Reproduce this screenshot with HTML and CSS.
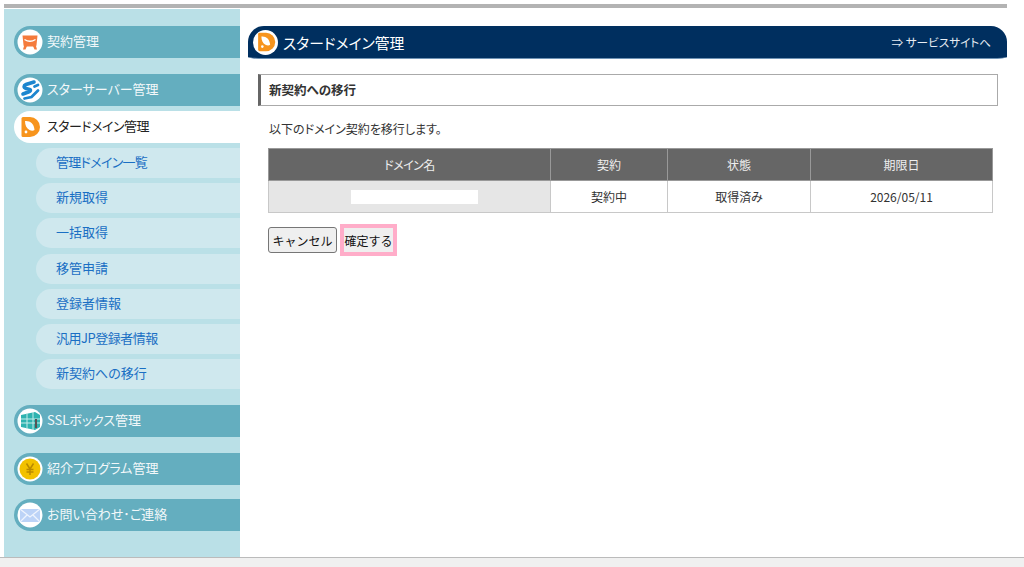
FILE: index.html
```html
<!DOCTYPE html>
<html lang="ja">
<head>
<meta charset="utf-8">
<title>スタードメイン管理</title>
<link rel="stylesheet" href="styles.css">
</head>
<body>
<div class="page">
  <div class="topbar"></div>
  <div class="layout">
    <nav class="side">
      <a class="main m-contract"><span class="ico"><svg viewBox="0 0 26 26" width="26" height="26"><circle cx="13" cy="13" r="12.500" fill="#fff"/><path d="M5.500 6.500h15l-1 9.500c0 1-1 1.500-2 1.500h-9c-1 0-2-.5-2-1.500z" fill="#f47a3c"/><path d="M7 17h3l-1.500 3.500H6zM16 17h3l1 3.500h-2.500z" fill="#f47a3c"/><path d="M7.500 10.500q5.500 3.500 11 0" stroke="#fff" stroke-width="1.300" fill="none"/></svg></span>契約管理</a>
      <a class="main m-server"><span class="ico"><svg viewBox="0 0 26 26" width="26" height="26"><circle cx="13" cy="13" r="12.500" fill="#fff"/><path d="M17 5 9 7.500c-2.500 1-2.500 3.300 0 4l3.500 1c1.500.6 1 1.700-.5 2.200L6 17" stroke="#1c86cf" stroke-width="3.600" fill="none" stroke-linecap="round"/><path d="M21 8l-3.500 1.500M21 13.500 14.500 20l-7 1.500" stroke="#1c86cf" stroke-width="2.800" fill="none" stroke-linecap="round"/></svg></span>スターサーバー管理</a>
      <a class="main active"><span class="ico"><svg viewBox="0 0 26 26" width="26" height="26"><path d="M6 3h7a10 10 0 0 1 0 20H6a1.500 1.500 0 0 1-1.500-1.500v-17A1.500 1.500 0 0 1 6 3z" fill="#f7941d"/><path d="M8 7c5-.5 9 2.500 9.500 9-1 .8-3 1-5 0-3-1.500-4.500-5-4.500-9z" fill="#fff"/><circle cx="9" cy="18" r="1.400" fill="#fff"/></svg></span><span class="narrow">スタードメイン管理</span></a>
      <ul class="subs">
        <li class="sub narrow-more">管理ドメイン一覧</li>
        <li class="sub">新規取得</li>
        <li class="sub">一括取得</li>
        <li class="sub">移管申請</li>
        <li class="sub">登録者情報</li>
        <li class="sub narrow">汎用JP登録者情報</li>
        <li class="sub">新契約への移行</li>
      </ul>
      <a class="main m-ssl"><span class="ico"><svg viewBox="0 0 26 26" width="26" height="26"><circle cx="13" cy="13" r="12.500" fill="#fff"/><path d="M4 7l14-3 5 3v12l-5 3-14-3z" fill="#2fb3b0"/><path d="M4 11h19M4 15h19M10 5v16M16 4v18" stroke="#c5ecea" stroke-width="1"/><path d="M18 11h2v9h-2z" fill="#555"/></svg></span>SSLボックス管理</a>
      <a class="main m-ref"><span class="ico"><svg viewBox="0 0 26 26" width="26" height="26"><circle cx="13" cy="13" r="12.500" fill="#fff"/><circle cx="13" cy="13" r="10.500" fill="#f2c100"/><path d="M9.500 7.500 13 13l3.500-5.500M13 13v6M9.500 13.500h7M9.500 16h7" stroke="#b98a00" stroke-width="1.500" fill="none"/></svg></span>紹介プログラム管理</a>
      <a class="main m-mail"><span class="ico"><svg viewBox="0 0 26 26" width="26" height="26"><circle cx="13" cy="13" r="12.500" fill="#fff"/><path d="M3 7h20v13H3z" fill="#bcd3f7"/><path d="M3 7l10 8 10-8M3 20l7-7M23 20l-7-7" stroke="#eef4fd" stroke-width="1.300" fill="none"/></svg></span>お問い合わせ･ご連絡</a>
    </nav>
    <main class="content">
      <header class="banner">
        <span class="banner-ico"><svg viewBox="0 0 26 26" width="24" height="24"><path d="M6 3h7a10 10 0 0 1 0 20H6a1.500 1.500 0 0 1-1.500-1.500v-17A1.500 1.500 0 0 1 6 3z" fill="#f7941d"/><path d="M8 7c5-.5 9 2.500 9.500 9-1 .8-3 1-5 0-3-1.500-4.500-5-4.500-9z" fill="#fff"/><circle cx="9" cy="18" r="1.400" fill="#fff"/></svg></span>
        <h1 class="banner-title">スタードメイン管理</h1>
        <a class="banner-link">⇒ サービスサイトへ</a>
      </header>
      <h2 class="panel">新契約への移行</h2>
      <p class="lead">以下のドメイン契約を移行します。</p>
      <table class="tbl">
        <thead>
          <tr><th class="c1 narrow">ドメイン名</th><th class="c2">契約</th><th class="c3">状態</th><th class="c4">期限日</th></tr>
        </thead>
        <tbody>
          <tr><td class="dom"><span class="mask"></span></td><td>契約中</td><td>取得済み</td><td>2026/05/11</td></tr>
        </tbody>
      </table>
      <div class="btns">
        <button class="btn" type="button">キャンセル</button>
        <span class="hl"><button class="btn btn-ok" type="button">確定する</button></span>
      </div>
    </main>
  </div>
  <div class="foot"></div>
</div>
</body>
</html>
```
FILE: styles.css
```css
* { box-sizing: border-box; }
html, body { margin: 0; height: 100%; background: #fff; overflow: hidden; }
body { font-family: "Noto Sans CJK JP", "Liberation Sans", sans-serif; font-size: 12px; color: #333; font-feature-settings: "palt"; }
.page { width: 1024px; height: 567px; display: flex; flex-direction: column; }
.topbar { height: 4px; margin: 4px 17px 0 4px; background: #b3b3b3; flex: none; }
.layout { flex: 1; display: flex; padding-top: 1px; min-height: 0; }
.side { width: 236px; margin-left: 4px; background: #bae0e7; padding-top: 17px; flex: none; }
.main { display: flex; align-items: center; height: 32px; margin-left: 10px; padding: 0 0 2px 3px; gap: 4px; background: #64aebf; color: #f2f8fa; border-radius: 16px 0 0 16px; font-size: 13px; line-height: 30px; }
.ico { width: 26px; height: 26px; flex: none; display: block; margin-bottom: -2px; }
.ico svg { display: block; }
.narrow { letter-spacing: -0.500px; }
.narrow-more { letter-spacing: -0.700px; }
.m-server { margin-top: 16px; }
.active { margin-top: 5px; background: #fff; color: #222; }
.subs { list-style: none; margin: 5px 0 0; padding: 0; }
.sub { height: 30px; margin: 0 0 5.200px 32px; padding-left: 20px; background: #cfe8ee; color: #1a6fc4; border-radius: 15px 0 0 15px; line-height: 28px; font-size: 13px; }
.sub:last-child { margin-bottom: 0; }
.m-ssl { margin-top: 16px; }
.m-ref { margin-top: 16px; }
.m-mail { margin-top: 14px; }
.content { flex: 1; padding: 17px 17px 0 8px; min-width: 0; }
.banner { display: flex; align-items: center; height: 33px; background: #002f5f; border-bottom: 1px solid #6f93b5; border-radius: 16px 16px 16px 16px / 16px 16px 2px 2px; color: #fff; padding: 0 16px 0 5px; }
.banner-ico { width: 25px; height: 25px; background: #fff; border-radius: 50%; display: flex; align-items: center; justify-content: center; flex: none; }
.banner-ico svg { display: block; }
.banner-title { margin: 0 0 0 5px; font-size: 14.800px; font-weight: 400; line-height: 31px; flex: 1; }
.banner-link { font-size: 11.600px; color: #e8edf3; }
.panel { margin: 15px 9px 0 10px; height: 32px; border: 1px solid #aaa; border-left: 3px solid #666; padding-left: 8px; font-size: 12.500px; font-weight: 700; line-height: 29px; color: #333; }
.lead { margin: 15px 0 0 21px; font-size: 12px; line-height: 16px; color: #333; }
.tbl { margin: 11px 0 0 20px; width: 725px; border-collapse: collapse; table-layout: fixed; font-size: 12px; }
.tbl th, .tbl td { border: 1px solid #c8c8c8; text-align: center; height: 32px; padding: 0; font-weight: 400; }
.tbl th { background: #666; color: #eee; border-color: #999; }
.c1 { width: 282px; }
.c2 { width: 117px; }
.c3 { width: 143px; }
.dom { background: #e6e6e6; }
.mask { display: block; width: 127px; height: 14px; margin: 0 0 0 82px; background: #fff; }
.btns { display: flex; align-items: center; margin: 11px 0 0 20px; gap: 3px; }
.btn { font-family: "Noto Sans CJK JP", "Liberation Sans", sans-serif; font-size: 12px; height: 26px; width: 69px; padding: 0; background: #efefef; border: 1px solid #767676; border-radius: 3px; color: #111; }
.hl { display: block; border: 4px solid #ffadc9; }
.btn-ok { display: block; height: 24px; width: 49px; border: 0; border-radius: 0; padding: 0; }
.foot { height: 10px; background: #f0f0f0; border-top: 1px solid #bbb; flex: none; }
```
